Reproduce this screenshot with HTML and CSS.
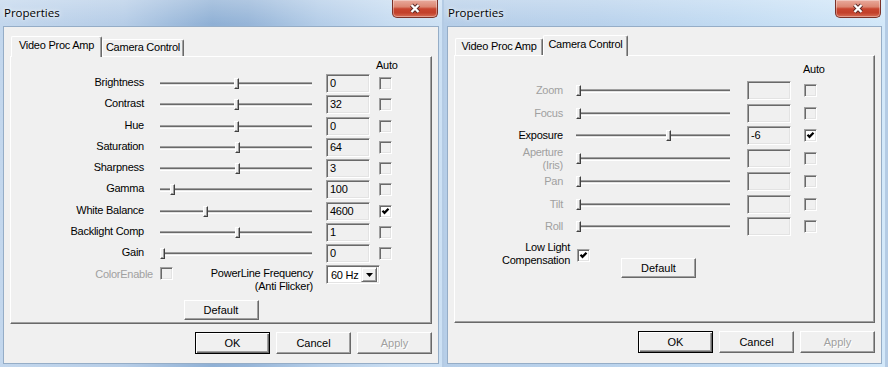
FILE: index.html
```html
<!DOCTYPE html>
<html lang="en">
<head>
<meta charset="utf-8">
<title>Properties</title>
<link rel="stylesheet" href="styles.css">
</head>
<body>
<div class="desk">

  <!-- Video Proc Amp page -->
  <div class="window win-left">
    <div class="titlebar">
      <span class="title">Properties</span>
      <span class="close">
        <svg width="12" height="11" viewBox="0 0 12 11">
          <path class="x-edge" d="M2.5 2 L9.5 9 M9.5 2 L2.5 9"/>
          <path class="x-face" d="M2.5 2 L9.5 9 M9.5 2 L2.5 9"/>
        </svg>
      </span>
    </div>
    <div class="client">
      <div class="tabs">
        <div class="tab tab-on w91">Video Proc Amp</div>
        <div class="tab w82">Camera Control</div>
      </div>
      <div class="panel amp">
        <div class="auto">Auto</div>
        <div class="rows">
          <div class="row">
            <span class="label">Brightness</span>
            <span class="slider"><span class="thumb" style="--v:0.503"></span></span>
            <span class="edit sunken">0</span>
            <span class="check sunken"></span>
          </div>
          <div class="row">
            <span class="label">Contrast</span>
            <span class="slider"><span class="thumb" style="--v:0.503"></span></span>
            <span class="edit sunken">32</span>
            <span class="check sunken"></span>
          </div>
          <div class="row">
            <span class="label">Hue</span>
            <span class="slider"><span class="thumb" style="--v:0.503"></span></span>
            <span class="edit sunken">0</span>
            <span class="check sunken"></span>
          </div>
          <div class="row">
            <span class="label">Saturation</span>
            <span class="slider"><span class="thumb" style="--v:0.51"></span></span>
            <span class="edit sunken">64</span>
            <span class="check sunken"></span>
          </div>
          <div class="row">
            <span class="label">Sharpness</span>
            <span class="slider"><span class="thumb" style="--v:0.51"></span></span>
            <span class="edit sunken">3</span>
            <span class="check sunken"></span>
          </div>
          <div class="row">
            <span class="label">Gamma</span>
            <span class="slider"><span class="thumb" style="--v:0.07"></span></span>
            <span class="edit sunken">100</span>
            <span class="check sunken"></span>
          </div>
          <div class="row">
            <span class="label">White Balance</span>
            <span class="slider"><span class="thumb" style="--v:0.29"></span></span>
            <span class="edit sunken">4600</span>
            <span class="check sunken checked"><svg width="9" height="9" viewBox="0 0 9 9"><path d="M1.5 3.8 L3.5 5.8 L7.5 1.8"/></svg></span>
          </div>
          <div class="row">
            <span class="label">Backlight Comp</span>
            <span class="slider"><span class="thumb" style="--v:0.51"></span></span>
            <span class="edit sunken">1</span>
            <span class="check sunken"></span>
          </div>
          <div class="row">
            <span class="label">Gain</span>
            <span class="slider"><span class="thumb" style="--v:0"></span></span>
            <span class="edit sunken">0</span>
            <span class="check sunken"></span>
          </div>
        </div>
        <div class="extra">
          <span class="ce-label off">ColorEnable</span>
          <span class="check sunken ce-check"></span>
          <span class="pl-label">PowerLine Frequency<br>(Anti Flicker)</span>
          <span class="combo sunken">
            <span class="combo-text">60 Hz</span>
            <span class="combo-btn"><svg width="7" height="4" viewBox="0 0 7 4"><path d="M0 0 H7 L3.5 4 Z"/></svg></span>
          </span>
        </div>
        <button class="btn btn-small amp-default">Default</button>
      </div>
      <div class="buttons">
        <button class="btn btn-ok">OK</button>
        <button class="btn">Cancel</button>
        <button class="btn btn-off">Apply</button>
      </div>
    </div>
  </div>

  <!-- Camera Control page -->
  <div class="window win-right">
    <div class="titlebar">
      <span class="title">Properties</span>
      <span class="close">
        <svg width="12" height="11" viewBox="0 0 12 11">
          <path class="x-edge" d="M2.5 2 L9.5 9 M9.5 2 L2.5 9"/>
          <path class="x-face" d="M2.5 2 L9.5 9 M9.5 2 L2.5 9"/>
        </svg>
      </span>
    </div>
    <div class="client">
      <div class="tabs">
        <div class="tab w88">Video Proc Amp</div>
        <div class="tab tab-on w85">Camera Control</div>
      </div>
      <div class="panel cam">
        <div class="auto">Auto</div>
        <div class="rows">
          <div class="row">
            <span class="label off">Zoom</span>
            <span class="slider"><span class="thumb" style="--v:0"></span></span>
            <span class="edit sunken"></span>
            <span class="check sunken"></span>
          </div>
          <div class="row">
            <span class="label off">Focus</span>
            <span class="slider"><span class="thumb" style="--v:0"></span></span>
            <span class="edit sunken"></span>
            <span class="check sunken"></span>
          </div>
          <div class="row">
            <span class="label">Exposure</span>
            <span class="slider"><span class="thumb" style="--v:0.604"></span></span>
            <span class="edit sunken">-6</span>
            <span class="check sunken checked"><svg width="9" height="9" viewBox="0 0 9 9"><path d="M1.5 3.8 L3.5 5.8 L7.5 1.8"/></svg></span>
          </div>
          <div class="row">
            <span class="label off">Aperture<br>(Iris)</span>
            <span class="slider"><span class="thumb" style="--v:0"></span></span>
            <span class="edit sunken"></span>
            <span class="check sunken"></span>
          </div>
          <div class="row">
            <span class="label off">Pan</span>
            <span class="slider"><span class="thumb" style="--v:0"></span></span>
            <span class="edit sunken"></span>
            <span class="check sunken"></span>
          </div>
          <div class="row">
            <span class="label off">Tilt</span>
            <span class="slider"><span class="thumb" style="--v:0"></span></span>
            <span class="edit sunken"></span>
            <span class="check sunken"></span>
          </div>
          <div class="row">
            <span class="label off">Roll</span>
            <span class="slider"><span class="thumb" style="--v:0"></span></span>
            <span class="edit sunken"></span>
            <span class="check sunken"></span>
          </div>
        </div>
        <div class="extra">
          <span class="ll-label">Low Light<br>Compensation</span>
          <span class="check sunken checked ll-check"><svg width="9" height="9" viewBox="0 0 9 9"><path d="M1.5 3.8 L3.5 5.8 L7.5 1.8"/></svg></span>
          <button class="btn btn-small cam-default">Default</button>
        </div>
      </div>
      <div class="buttons">
        <button class="btn btn-ok">OK</button>
        <button class="btn">Cancel</button>
        <button class="btn btn-off">Apply</button>
      </div>
    </div>
  </div>

</div>
</body>
</html>
```

FILE: styles.css
```css
body {
    margin: 0;
    background: #b4cbe4;
    font: 11px "Liberation Sans", Arial, sans-serif;
    letter-spacing: -0.25px;
    color: #000;
}

.desk {
    display: flex;
    gap: 2px;
}

/* window frame + aero title bar */

.window {
    box-sizing: border-box;
    width: 442px;
    height: 367px;
    padding: 0 3px 3px;
    display: flex;
    flex-direction: column;
}

.win-left {
    background:
        linear-gradient(180deg, rgba(255,255,255,.25), rgba(255,255,255,0) 24px),
        linear-gradient(90deg, #c3d7ed 0%, #b6cde7 28%, #8fb0d5 48%, #96b5d8 56%, #b4cde8 72%, #c7dcf1 88%, #cde1f4 100%);
}

.win-right {
    width: 441px;
    background:
        linear-gradient(180deg, rgba(255,255,255,.25), rgba(255,255,255,0) 24px),
        linear-gradient(90deg, #b6cee8 0%, #b9d2ec 35%, #c2dbf2 65%, #d3e8f9 100%);
}

.titlebar {
    height: 26px;
    display: flex;
    justify-content: space-between;
    align-items: flex-start;
}

.title {
    margin: 5px 0 0 1px;
    font: 11.5px/16px "Open Sans", "Noto Sans", sans-serif;
    letter-spacing: 0;
    color: #000;
    text-shadow: 0 0 6px rgba(255,255,255,.9), 0 0 3px rgba(255,255,255,.8);
}

.close {
    box-sizing: border-box;
    width: 46px;
    height: 18px;
    margin-right: 1px;
    display: flex;
    align-items: center;
    justify-content: center;
    border: 1px solid #7a3128;
    border-top: none;
    border-radius: 0 0 5px 5px;
    background: linear-gradient(180deg, #e9aa9c 0%, #dc8672 40%, #c8452f 52%, #c2402b 75%, #d76d55 100%);
    box-shadow: inset 0 0 0 1px rgba(255,255,255,.35);
}

.x-edge {
    fill: none;
    stroke: #5a2b28;
    stroke-width: 4.2;
}

.x-face {
    fill: none;
    stroke: #fff;
    stroke-width: 2.4;
}

/* client area */

.client {
    flex: 1;
    background: #f0f0f0;
    border: 1px solid #95adc7;
    padding: 9px 0 0 6px;
}

.win-right .client {
    padding-top: 8px;
}

.tabs {
    display: flex;
    align-items: flex-end;
    height: 20px;
    margin-left: 1px;
}

.tab {
    box-sizing: border-box;
    height: 17px;
    line-height: 14px;
    text-align: center;
    white-space: nowrap;
    background: #f0f0f0;
    border: 1px solid;
    border-color: #fff #696969 transparent #fff;
    border-bottom: none;
    border-radius: 2px 2px 0 0;
    box-shadow: inset -1px 0 #a0a0a0;
}

.tab-on {
    position: relative;
    z-index: 1;
    height: 21px;
    margin-bottom: -1px;
    padding-top: 1px;
}

.w91 { width: 91px; }
.w82 { width: 82px; }
.w88 { width: 88px; }
.w85 { width: 85px; }

.panel {
    box-sizing: border-box;
    width: 422px;
    height: 268px;
    border: 1px solid;
    border-color: #fff #696969 #696969 #fff;
    box-shadow: inset -1px -1px #a0a0a0;
}

.cam {
    width: 421px;
}

.auto {
    height: 13px;
    line-height: 13px;
}

.amp .auto {
    margin: 2px 0 0 365px;
}

.cam .auto {
    margin: 7px 0 0 348px;
}

.row {
    display: flex;
    align-items: center;
}

.label {
    text-align: right;
    line-height: 13px;
}

.off {
    color: #a0a0a0;
}

.amp .rows {
    margin-top: 1px;
}

.amp .row {
    height: 21.25px;
}

.amp .label {
    width: 133px;
    margin-bottom: 2px;
}

.amp .slider {
    width: 152px;
    margin-left: 16px;
}

.amp .edit {
    margin-left: 14px;
}

.amp .row .check {
    margin-left: 9px;
}

.cam .rows {
    margin-top: 3px;
}

.cam .row {
    height: 22.75px;
}

.cam .label {
    width: 108px;
}

.cam .slider {
    width: 154px;
    margin-left: 13px;
}

.cam .edit {
    margin-left: 17px;
}

.cam .row .check {
    margin-left: 13px;
}

/* trackbar */

.slider {
    position: relative;
    height: 11px;
}

.slider::before {
    content: "";
    position: absolute;
    left: 0;
    right: 0;
    top: 4px;
    height: 4px;
    box-sizing: border-box;
    border-top: 1px solid #a0a0a0;
    border-bottom: 1px solid #fff;
    background: linear-gradient(#696969 0 1px, #e3e3e3 1px);
}

.thumb {
    position: absolute;
    top: 0;
    left: calc((100% - 5px) * var(--v));
    box-sizing: border-box;
    width: 5px;
    height: 11px;
    background: #f0f0f0;
    border: 1px solid;
    border-color: #fff #404040 #404040 #fff;
    box-shadow: inset -1px -1px #a0a0a0;
}

/* edit boxes, check boxes */

.sunken {
    box-sizing: border-box;
    border: 1px solid;
    border-color: #a0a0a0 #fff #fff #a0a0a0;
    box-shadow: inset 1px 1px #696969, inset -1px -1px #e3e3e3;
}

.edit {
    width: 44px;
    height: 19px;
    padding: 0 3px;
    line-height: 17px;
    background: #f0f0f0;
}

.check {
    display: flex;
    align-items: center;
    justify-content: center;
    width: 13px;
    height: 13px;
    background: #f0f0f0;
}

.checked {
    background: #fff;
}

.check path {
    fill: none;
    stroke: #000;
    stroke-width: 2.3;
}

/* bottom controls */

.extra {
    display: flex;
    align-items: flex-start;
}

.amp .extra {
    height: 28px;
    margin-top: 1px;
}

.ce-label {
    width: 142px;
    margin-top: 3px;
    text-align: right;
    line-height: 13px;
}

.ce-check {
    margin: 2px 0 0 7px;
}

.pl-label {
    width: 140px;
    margin-top: 2px;
    text-align: right;
    line-height: 13px;
}

.combo {
    display: flex;
    align-items: center;
    width: 54px;
    height: 19px;
    margin-left: 13px;
    padding: 2px;
    background: #fff;
}

.combo-text {
    flex: 1;
    padding-left: 2px;
}

.combo-btn {
    box-sizing: border-box;
    width: 16px;
    height: 15px;
    display: flex;
    align-items: center;
    justify-content: center;
    background: #f0f0f0;
    border: 1px solid;
    border-color: #f0f0f0 #696969 #696969 #f0f0f0;
    box-shadow: inset 1px 1px #fff, inset -1px -1px #a0a0a0;
}

.combo-btn path {
    fill: #000;
}

.cam .extra {
    margin-top: 3px;
}

.ll-label {
    width: 115px;
    text-align: right;
    line-height: 13px;
}

.ll-check {
    margin: 8px 0 0 7px;
}

/* push buttons */

.btn {
    box-sizing: border-box;
    width: 75px;
    height: 22px;
    padding: 0;
    font: inherit;
    color: #000;
    background: #f0f0f0;
    border: 1px solid;
    border-color: #fff #696969 #696969 #fff;
    box-shadow: inset -1px -1px #a0a0a0;
}

.btn-small {
    height: 20px;
}

.btn-ok {
    border-color: #000;
    box-shadow: inset 1px 1px #fff, inset -1px -1px #696969, inset -2px -2px #a0a0a0;
}

.btn-off {
    color: #a0a0a0;
    text-shadow: 1px 1px #fff;
}

.amp-default {
    display: block;
    margin: 7px auto 0;
}

.cam-default {
    margin: 17px 0 0 31px;
}

.buttons {
    display: flex;
    justify-content: flex-end;
    gap: 6px;
    width: 422px;
    margin-top: 8px;
}

.win-right .buttons {
    width: 421px;
}
```
